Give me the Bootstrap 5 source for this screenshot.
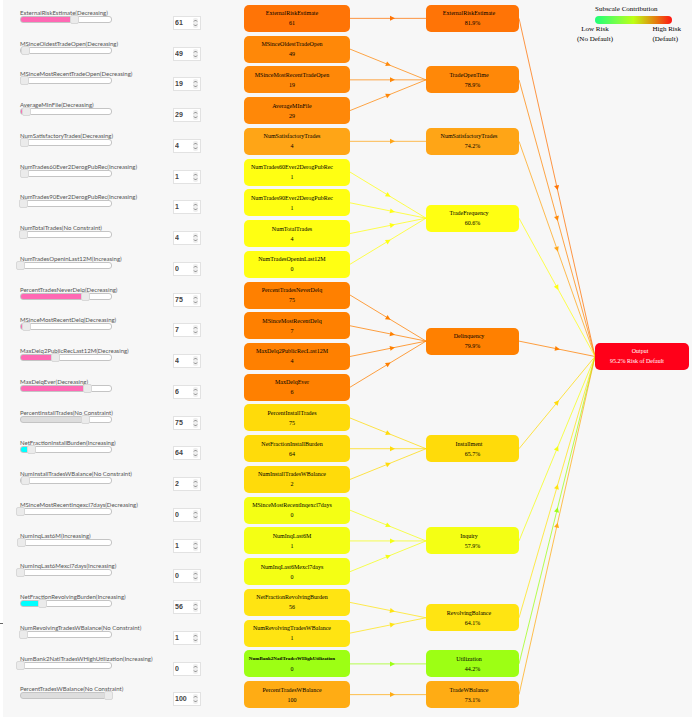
<!DOCTYPE html>
<html lang="en">
<head>
<meta charset="utf-8">
<meta name="viewport" content="width=device-width, initial-scale=1">
<title>Subscale Contribution</title>
<link href="https://cdn.jsdelivr.net/npm/bootstrap@5.3.0/dist/css/bootstrap.min.css" rel="stylesheet">
<style>
  body {
    background: linear-gradient(#666, #666) 0 87% / 3px 1px no-repeat #fff;
    font-family: "Liberation Serif", serif;
    font-size: 6px;
    line-height: 10px;
    color: #000;
  }
  .model {
    background: #f7f7f7;
    margin-left: 3px;
    padding: 3px 3px 7px 17px;
    grid-template-columns:
      minmax(0, 153fr) 28px 43px minmax(0, 106fr) minmax(0, 76fr)
      minmax(0, 93fr) minmax(0, 76fr) minmax(0, 94fr);
    /* two half rows per feature, so a subscale can sit between two features */
    grid-template-rows: repeat(46, minmax(15px, 1fr));
  }
  .feature { grid-column: 1; padding-top: 6px; }
  .feature label {
    font: 6px/7px Lato, "Liberation Sans", sans-serif;
    color: #555;
  }
  .slide-track {
    width: 60%;
    height: 7px;
    border: 1px solid #c4c4c4;
    border-radius: 3px;
    background: linear-gradient(var(--fill), var(--fill)) 0 0 / var(--at) 100% no-repeat #fff;
  }
  .slide-track input {
    appearance: none;
    flex: none;
    width: calc(100% + 10px);
    height: 9px;
    margin: 0 -5px;
    background: none;
  }
  .slide-track input::-webkit-slider-thumb {
    appearance: none;
    width: 9px;
    height: 9px;
    border: 1px solid #d8d8d8;
    border-radius: 2px;
    background: #ebebeb;
  }
  .amount {
    grid-column: 2;
    height: 14px;
    margin-top: 13px;
    border: 1px solid #e2e2e2;
    background: #fff;
    padding: 0 2px 0 1px;
  }
  .amount input {
    appearance: textfield;
    min-width: 0;
    font: bold 7px/12px "Liberation Sans", sans-serif;
    color: #444;
  }
  .amount input::-webkit-inner-spin-button { display: none; }
  .amount svg { width: 5px; height: 10px; flex: none; }
  .unit { height: 27px; border-radius: 5px; white-space: nowrap; }
  .unit-in { grid-column: 4; padding-right: 10px; }
  .unit-sub { grid-column: 6; }
  .unit-sub .unit-name { padding-right: 7px; }
  .unit-out { grid-column: 8; background: #ff0019; color: #fff; padding-right: 10px; }
  .unit-out .unit-name { padding-left: 6px; }
  .tight { font-size: 5px; font-weight: bold; }
  .wires { grid-row: 1 / -1; height: 0; min-height: 100%; width: 100%; overflow: visible; }
  .wires-in { grid-column: 5; }
  .wires-out { grid-column: 7; }
  .legend-box { grid-column: 7 / 9; grid-row: 1 / 4; width: 112px; justify-self: end; padding-top: 1px; font-size: 7px; }
  .legend-title { padding-left: 18px; }
  .legend-bar {
    height: 8px;
    margin: 2px 17px 0 18px;
    border-radius: 4px;
    background: linear-gradient(90deg, #1eff78, #7dff46 30%, #beff14 50%, #e6780f 80%, #ff1414);
  }
</style>
<script src="https://cdn.jsdelivr.net/npm/bootstrap@5.3.0/dist/js/bootstrap.bundle.min.js"></script>
</head>
<body>
<main class="model d-grid min-vh-100" id="model">
  <section class="legend-box" aria-label="Legend">
    <div class="legend-title">Subscale Contribution</div>
    <div class="legend-bar"></div>
    <div class="d-flex justify-content-between">
      <div class="text-center">Low Risk<br>(No Default)</div>
      <div class="pe-2">High Risk<br>(Default)</div>
    </div>
  </section>
</main>
<script>
  // name, direction, value, slider position (%), subscale index
  const features = [
    ['ExternalRiskEstimate', 'Decreasing', 61, 59, 0],
    ['MSinceOldestTradeOpen', 'Decreasing', 49, 6, 1],
    ['MSinceMostRecentTradeOpen', 'Decreasing', 19, 4, 1],
    ['AverageMInFile', 'Decreasing', 29, 7, 1],
    ['NumSatisfactoryTrades', 'Decreasing', 4, 4, 2],
    ['NumTrades60Ever2DerogPubRec', 'Increasing', 1, 4, 3],
    ['NumTrades90Ever2DerogPubRec', 'Increasing', 1, 3, 3],
    ['NumTotalTrades', 'No Constraint', 4, 3, 3],
    ['NumTradesOpeninLast12M', 'Increasing', 0, 0, 3],
    ['PercentTradesNeverDelq', 'Decreasing', 75, 72, 4],
    ['MSinceMostRecentDelq', 'Decreasing', 7, 7, 4],
    ['MaxDelq2PublicRecLast12M', 'Decreasing', 4, 39, 4],
    ['MaxDelqEver', 'Decreasing', 6, 74, 4],
    ['PercentInstallTrades', 'No Constraint', 75, 72, 5],
    ['NetFractionInstallBurden', 'Increasing', 64, 12, 5],
    ['NumInstallTradesWBalance', 'No Constraint', 2, 5, 5],
    ['MSinceMostRecentInqexcl7days', 'Decreasing', 0, 0, 6],
    ['NumInqLast6M', 'Increasing', 1, 1, 6],
    ['NumInqLast6Mexcl7days', 'Increasing', 0, 0, 6],
    ['NetFractionRevolvingBurden', 'Increasing', 56, 24, 7],
    ['NumRevolvingTradesWBalance', 'No Constraint', 1, 3, 7],
    ['NumBank2NatlTradesWHighUtilization', 'Increasing', 0, 0, 8],
    ['PercentTradesWBalance', 'No Constraint', 100, 97, 9]
  ];
  // name, share, row, colour
  const subscales = [
    ['ExternalRiskEstimate', '81.9%', 0, '#ff7406'],
    ['TradeOpenTime', '78.9%', 2, '#ff8808'],
    ['NumSatisfactoryTrades', '74.2%', 4, '#ffa516'],
    ['TradeFrequency', '60.6%', 6.5, '#ffff12'],
    ['Delinquency', '79.9%', 10.5, '#ff8000'],
    ['Installment', '65.7%', 14, '#ffdb0a'],
    ['Inquiry', '57.9%', 17, '#f4ff14'],
    ['RevolvingBalance', '64.1%', 19.5, '#ffe412'],
    ['Utilization', '44.2%', 21, '#9dff14'],
    ['TradeWBalance', '73.1%', 22, '#ffac14']
  ];
  const fills = { Decreasing: '#ff69b4', Increasing: '#00ffff', 'No Constraint': '#dddddd' };
  const outputRow = 11;
  const band = row => `grid-row:${row * 2 + 1} / span 2`;
  const middle = row => (row + 0.5) * 707 / 23;

  const unit = (kind, name, value, row, colour) =>
    `<div class="unit ${kind} align-self-center d-flex flex-column justify-content-center text-center" style="${band(row)}${colour ? `;background:${colour}` : ''}">
      <div class="unit-name${name.length > 30 ? ' tight' : ''}">${name}</div><div>${value}</div></div>`;

  function wire(from, to, colour, ahead) {
    const y1 = middle(from), y2 = middle(to);
    const at = 0.5 + ahead / 76;
    const angle = Math.atan2(y2 - y1, 76) * 180 / Math.PI;
    return `<path d="M0 ${y1}L76 ${y2}" stroke="${colour}" stroke-opacity=".75"/>
      <path d="M-2-2.5L3 0L-2 2.5Z" fill="${colour}" transform="translate(${76 * at} ${y1 + (y2 - y1) * at}) rotate(${angle})"/>`;
  }
  const wires = (kind, body) =>
    `<svg class="wires ${kind}" viewBox="0 0 76 707" preserveAspectRatio="none" fill="none" aria-hidden="true">${body}</svg>`;

  const html = features.map(([name, rule, value, at, sub], i) => `
    <div class="feature" style="${band(i)}">
      <label class="d-block text-nowrap" for="s${i}">${name}(${rule})</label>
      <div class="slide-track d-flex align-items-center" style="--fill:${fills[rule]};--at:${at}%">
        <input type="range" id="s${i}" min="0" max="100" value="${at}">
      </div>
    </div>
    <div class="amount d-flex align-items-center" style="${band(i)}">
      <input class="border-0 p-0 w-100 bg-transparent" type="number" value="${value}" aria-label="${name} value">
      <svg viewBox="0 0 5 10" aria-hidden="true"><rect width="5" height="10" rx="2" fill="#eee"/><path d="M1 3.5L2.5 2L4 3.5M1 6.5L2.5 8L4 6.5" fill="none" stroke="#666" stroke-width=".8"/></svg>
    </div>
    ${unit('unit-in', name, value, i, subscales[sub][3])}`).join('')
    + wires('wires-in', features.map((f, i) => {
        const [, , row, colour] = subscales[f[4]];
        return wire(i, row, colour, Math.abs(row - i) < 1 ? 4 : 0);
      }).join(''))
    + subscales.map(([name, share, row, colour]) => unit('unit-sub', name, share, row, colour)).join('')
    + wires('wires-out', subscales.map(s => wire(s[2], outputRow, s[3], 0)).join(''))
    + unit('unit-out', 'Output', '95.2% Risk of Default', outputRow, '');
  document.getElementById('model').insertAdjacentHTML('beforeend', html);

  document.querySelectorAll('.slide-track input').forEach(input =>
    input.addEventListener('input', () => input.parentElement.style.setProperty('--at', input.value + '%')));
</script>
</body>
</html>
